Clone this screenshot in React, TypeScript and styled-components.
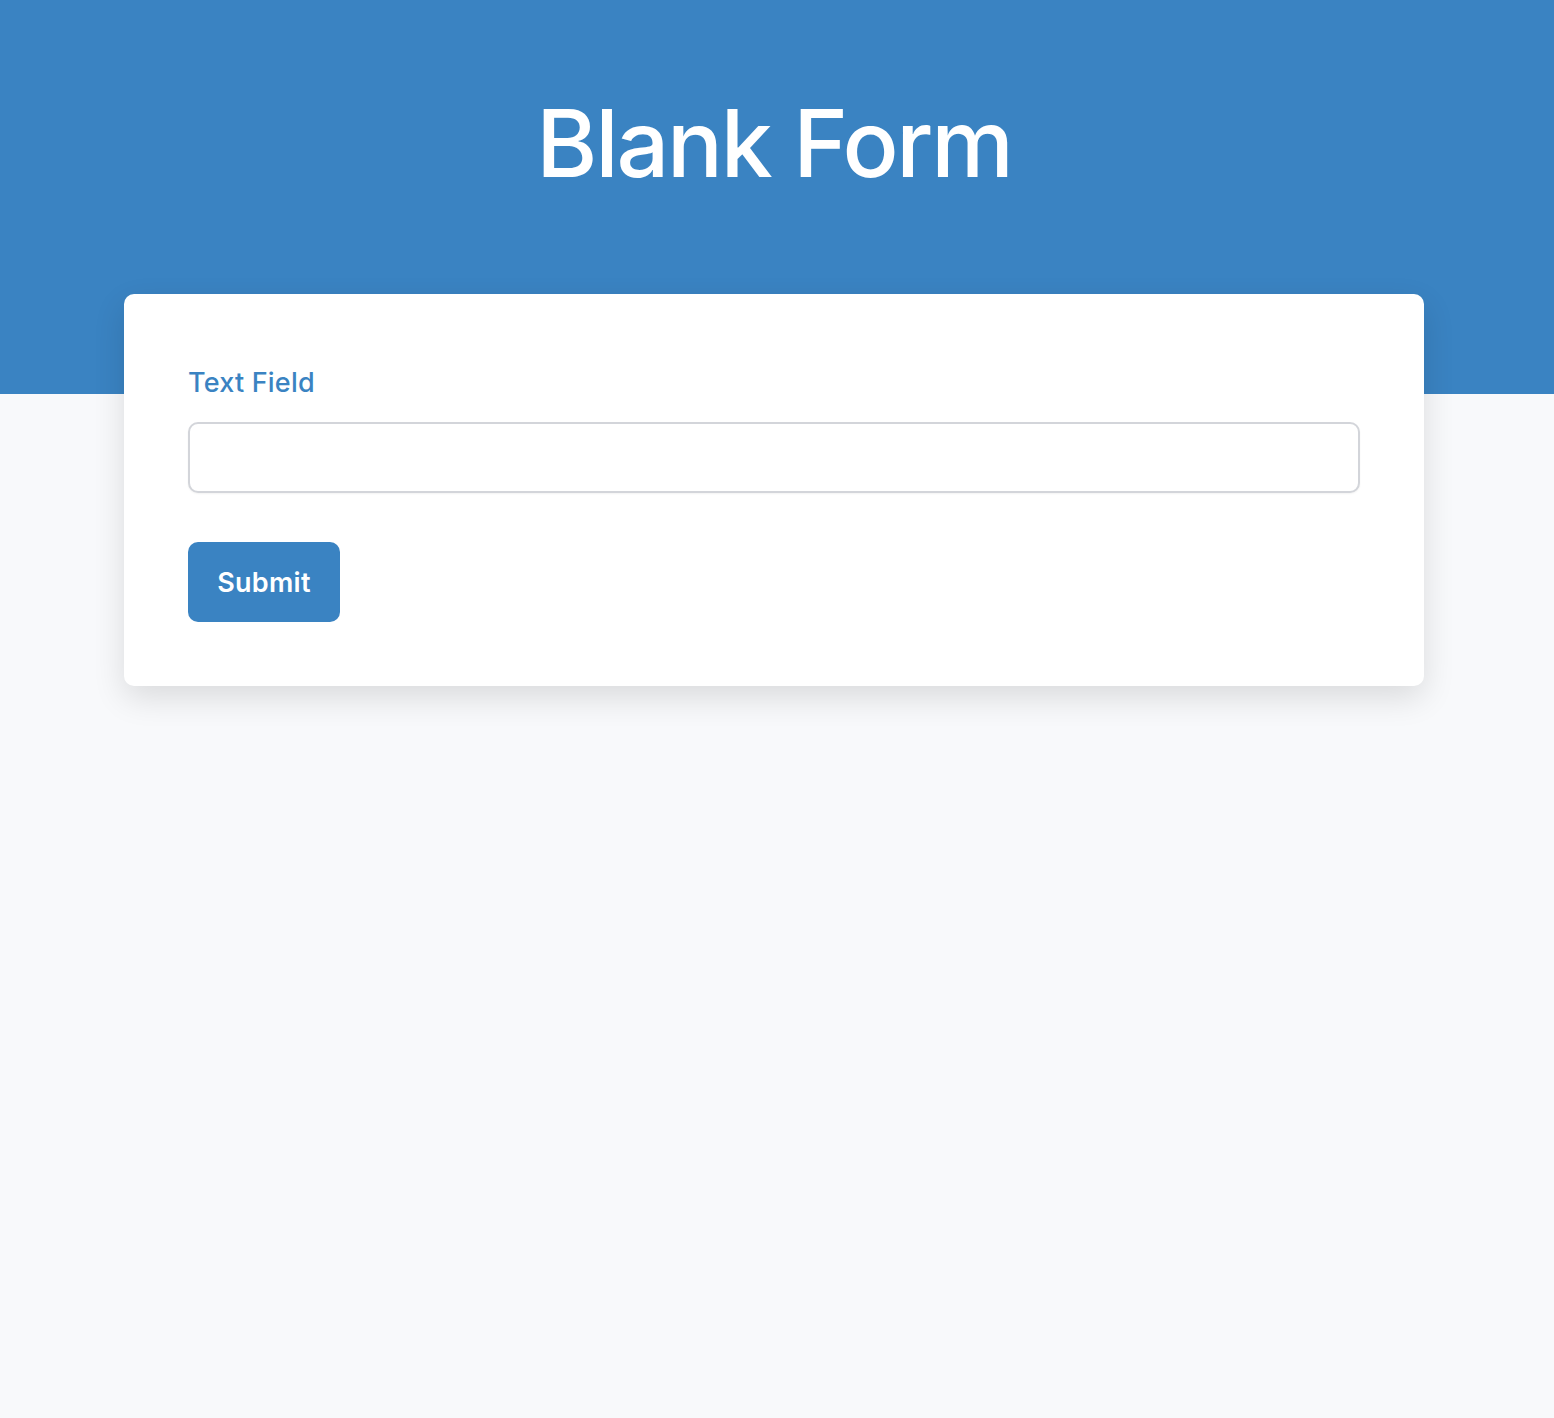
import * as React from "react";
import styled, { createGlobalStyle } from "styled-components";

const GlobalStyle = createGlobalStyle`
  * {
    box-sizing: border-box;
  }
  body {
    margin: 0;
    background: #f8f9fb;
    font-family: Inter, "Noto Sans", sans-serif;
  }
`;

const App = () => {
  return (
    <>
      <GlobalStyle />
      <Header>
        <Title>Blank Form</Title>
      </Header>
      <Main>
        <Card>
          <Field>
            <Label htmlFor="text-field">Text Field</Label>
            <Input id="text-field" type="text" />
          </Field>
          <SubmitButton type="button">Submit</SubmitButton>
        </Card>
      </Main>
    </>
  );
};

export default App;

const Header = styled.header`
  height: 394px;
  background: #3a83c2;
  padding: 97px 6px 0 0;
`;

const Title = styled.h1`
  margin: 0;
  text-align: center;
  color: #fff;
  font-size: 93px;
  font-weight: 500;
  letter-spacing: -2.2px;
  line-height: 1;
`;

const Main = styled.main`
  padding-right: 6px;
  margin-top: -100px;
  padding-bottom: 120px;
`;

const Card = styled.div`
  width: 1300px;
  margin: 0 auto;
  background: #fff;
  border-radius: 10px;
  padding: 64px;
  box-shadow: 0 12px 32px rgba(0, 0, 0, 0.12);
`;

const Field = styled.div`
  display: flex;
  flex-direction: column;
  margin-bottom: 49px;
`;

const Label = styled.label`
  color: #3a83c2;
  font-size: 27px;
  font-weight: 450;
  letter-spacing: 0.2px;
  line-height: 48px;
  margin: 1px 0 15px 0;
`;

const Input = styled.input`
  height: 71px;
  width: 100%;
  border: 2px solid #d3d5da;
  border-radius: 10px;
  font-size: 24px;
  padding: 0 20px;
  outline: none;
  font-family: inherit;
  box-shadow: 0 1px 2px rgba(0, 0, 0, 0.05);
`;

const SubmitButton = styled.button`
  width: 152px;
  height: 80px;
  border: none;
  border-radius: 10px;
  background: #3a83c2;
  color: #fff;
  font-family: inherit;
  font-size: 27px;
  font-weight: 600;
  letter-spacing: 0.3px;
  cursor: pointer;
`;
